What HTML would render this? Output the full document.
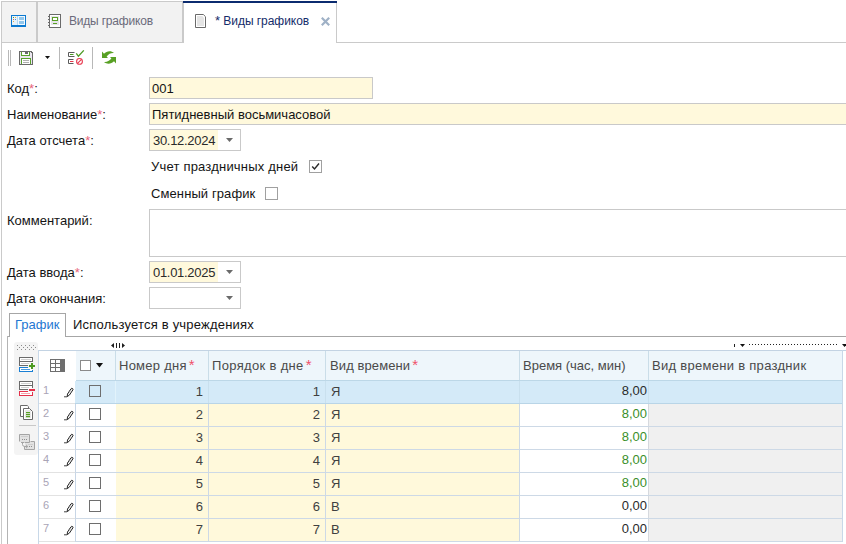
<!DOCTYPE html>
<html><head><meta charset="utf-8">
<style>
*{box-sizing:border-box;margin:0;padding:0}
html,body{width:846px;height:544px;overflow:hidden;background:#fff;font-family:"Liberation Sans",sans-serif;font-size:13px;color:#141414;position:relative}
.a{position:absolute}
.t{position:absolute;white-space:nowrap;line-height:15px}
.req{color:#e8657a}
.fld{position:absolute;border:1px solid #c9c9c9;background:#fff9dc}
.cb{position:absolute;border:1px solid #6e6e6e;background:#fff}
.dd{position:absolute;width:0;height:0;border-left:4px solid transparent;border-right:4px solid transparent;border-top:4px solid #707070}
.rn{font-size:11px;color:#a9a4b6}
.num{text-align:right}
.hd{color:#4a4a4a}
.cell{color:#404040}
.hreq{margin-left:2px;letter-spacing:0;color:#f0506a;font-size:15px;line-height:0}
</style></head><body>

<div class="a" style="left:1px;top:1px;width:35px;height:41px;background:#f2f2f2;"></div>
<div class="a" style="left:38px;top:1px;width:144px;height:41px;background:#f2f2f2;"></div>
<div class="a" style="left:1px;top:1px;width:182px;height:1px;background:#cacaca;"></div>
<div class="a" style="left:1px;top:1px;width:1px;height:543px;background:#cacaca;"></div>
<div class="a" style="left:36px;top:1px;width:2px;height:42px;background:#cacaca;"></div>
<div class="a" style="left:182px;top:1px;width:2px;height:42px;background:#cacaca;"></div>
<div class="a" style="left:1px;top:42px;width:183px;height:1px;background:#cacaca;"></div>
<div class="a" style="left:183px;top:1px;width:154px;height:2px;background:#0b2b6f;"></div>
<div class="a" style="left:336px;top:3px;width:1px;height:40px;background:#cacaca;"></div>
<div class="a" style="left:336px;top:42px;width:510px;height:1px;background:#cacaca;"></div>
<svg class="a" style="left:11px;top:15px" width="15" height="12" viewBox="0 0 15 12" shape-rendering="crispEdges">
  <rect x="0" y="0" width="15" height="12" fill="#0b79d0"/>
  <rect x="1" y="1" width="13" height="9" fill="#f2f9fe"/>
  <rect x="1" y="1" width="5" height="9" fill="#e6f3fc"/>
  <rect x="6" y="1" width="1" height="9" fill="#b4d9f3"/>
  <rect x="8" y="2" width="5" height="3" fill="#92c7ec"/>
  <rect x="8" y="6" width="5" height="3" fill="#92c7ec"/>
  <rect x="2" y="2" width="1" height="1" fill="#4a9a3a"/>
  <rect x="4" y="2" width="1" height="1" fill="#e8a840"/>
  <rect x="2" y="4" width="1" height="1" fill="#e86050"/>
  <rect x="4" y="4" width="1" height="1" fill="#3a90d8"/>
  <rect x="2" y="6" width="1" height="1" fill="#e8a840"/>
</svg>
<svg class="a" style="left:48px;top:14px" width="13" height="14" viewBox="0 0 13 14" shape-rendering="crispEdges">
  <rect x="1" y="0" width="12" height="14" fill="#6a6a6a"/>
  <rect x="2" y="1" width="10" height="12" fill="#fff"/>
  <rect x="3" y="2" width="8" height="9" fill="#e6e4ea"/>
  <rect x="4" y="3" width="6" height="4" fill="#58a024"/>
  <rect x="5" y="4" width="4" height="2" fill="#fff"/>
  <rect x="5" y="9" width="4" height="1" fill="#58a024"/>
  <rect x="0" y="2" width="1" height="1" fill="#6a6a6a"/>
  <rect x="0" y="5" width="1" height="1" fill="#6a6a6a"/>
  <rect x="0" y="8" width="1" height="1" fill="#6a6a6a"/>
  <rect x="0" y="11" width="1" height="1" fill="#6a6a6a"/>
</svg>
<div class="t " style="left:69px;top:14px;font-size:12px;letter-spacing:-0.2px;color:#6b6b7b">Виды графиков</div>
<svg class="a" style="left:195px;top:14px" width="11" height="14" viewBox="0 0 11 14">
  <path d="M0.5 0.5 H8.3 L10.5 2.7 V13.5 H0.5 Z" fill="#fff" stroke="#6a6a6a"/>
  <path d="M2 2 H7.3 L9 3.7 V12 H2 Z" fill="#e4e4e4"/>
</svg>
<div class="t " style="left:215px;top:13px;font-size:12px;letter-spacing:-0.05px;color:#142c6a"><span style="font-size:13px;letter-spacing:0">*</span> Виды графиков</div>
<svg class="a" style="left:320px;top:16px" width="11" height="11" viewBox="0 0 11 11">
  <path d="M1.8 1.8 L9.2 9.2 M9.2 1.8 L1.8 9.2" stroke="#9fb1c6" stroke-width="2.2"/>
</svg>
<div class="a" style="left:8px;top:50px;width:1px;height:16px;background:#b8b8b8;"></div>
<div class="a" style="left:10px;top:50px;width:1px;height:16px;background:#b8b8b8;"></div>
<svg class="a" style="left:19px;top:51px" width="14" height="14" viewBox="0 0 14 14" shape-rendering="crispEdges">
  <path d="M0 0 H12 L14 2 V14 H0 Z" fill="#6a6a6a"/>
  <path d="M1 1 H11.6 L13 2.4 V13 H1 Z" fill="#ebe7f0"/>
  <rect x="2" y="1" width="9" height="4" fill="#58a22a"/>
  <rect x="3" y="1" width="7" height="3" fill="#fff"/>
  <rect x="6" y="1" width="3" height="2" fill="#6a6a6a"/>
  <rect x="2" y="7" width="10" height="7" fill="#58a22a"/>
  <rect x="3" y="8" width="8" height="5" fill="#fff"/>
  <rect x="0" y="13" width="14" height="1" fill="#6a6a6a"/>
  <rect x="4" y="9" width="6" height="1" fill="#b0b0b0"/>
  <rect x="4" y="11" width="6" height="1" fill="#b0b0b0"/>
</svg>
<svg class="a" style="left:45px;top:56px" width="5" height="3" viewBox="0 0 5 3"><path d="M0 0 H5 L2.5 3 Z" fill="#111"/></svg>
<div class="a" style="left:59px;top:47px;width:1px;height:22px;background:#b8b8b8;"></div>
<svg class="a" style="left:68px;top:50px" width="17" height="15" viewBox="0 0 17 15">
  <path d="M6.5 2.5 H0.5 V6.5 H6.5" fill="none" stroke="#5a5a5a"/>
  <path d="M2 4.5 H5.5" stroke="#4b9a22"/>
  <path d="M5.5 9.5 H0.5 V13.5 H5.5" fill="none" stroke="#5a5a5a"/>
  <path d="M2 11.5 H5.5" stroke="#e23a4c"/>
  <path d="M8.3 3.4 L10.4 6.3 L15.8 0.4" fill="none" stroke="#4b9a22" stroke-width="1.3"/>
  <circle cx="11.5" cy="11.4" r="2.9" fill="none" stroke="#e83a50" stroke-width="1.1"/>
  <path d="M9.5 13.4 L13.5 9.4" stroke="#e83a50" stroke-width="1.1"/>
</svg>
<div class="a" style="left:92px;top:47px;width:1px;height:22px;background:#b8b8b8;"></div>
<svg class="a" style="left:101px;top:50px" width="16" height="14" viewBox="0 0 16 14">
  <g fill="#58a024">
  <path id="ra" d="M1 1.5 L3 3.7 C5.5 1 10 0.3 13 3 C10.2 2.7 7.8 3.7 5.6 6.4 L7 8 L1 8 Z"/>
  <path d="M1 1.5 L3 3.7 C5.5 1 10 0.3 13 3 C10.2 2.7 7.8 3.7 5.6 6.4 L7 8 L1 8 Z" transform="rotate(180 8 7.5)"/>
  </g>
</svg>
<div class="t " style="left:7px;top:81px;">Код<span class="req">*</span>:</div>
<div class="fld" style="left:149px;top:77px;width:224px;height:22px"></div>
<div class="t " style="left:152px;top:81px;">001</div>
<div class="t " style="left:7px;top:107px;">Наименование<span class="req">*</span>:</div>
<div class="fld" style="left:149px;top:103px;width:710px;height:22px"></div>
<div class="t " style="left:152px;top:107px;">Пятидневный восьмичасовой</div>
<div class="t " style="left:7px;top:133px;">Дата отсчета<span class="req">*</span>:</div>
<div class="fld" style="left:149px;top:129px;width:92px;height:22px;background:#fff"></div>
<div class="a" style="left:150px;top:130px;width:68px;height:20px;background:#fff9dc;"></div>
<div class="t " style="left:153px;top:133px;letter-spacing:-0.3px;color:#2a2a2a">30.12.2024</div>
<svg class="a" style="left:226px;top:138px" width="7" height="4" viewBox="0 0 7 4"><path d="M0 0 H7 L3.5 4 Z" fill="#6a6a6a"/></svg>
<div class="t " style="left:151px;top:159px;letter-spacing:0.2px">Учет праздничных дней</div>
<div class="cb" style="left:309px;top:160px;width:13px;height:13px;border-color:#a0a0a0"></div>
<svg class="a" style="left:311px;top:162px" width="9" height="9" viewBox="0 0 9 9"><path d="M1.2 4.5 L3.5 7 L8 1.5" fill="none" stroke="#2a2a2a" stroke-width="1.4"/></svg>
<div class="t " style="left:151px;top:186px;letter-spacing:0.1px">Сменный график</div>
<div class="cb" style="left:265px;top:187px;width:13px;height:13px;border-color:#a0a0a0"></div>
<div class="t " style="left:7px;top:213px;">Комментарий:</div>
<div class="a" style="left:149px;top:209px;width:710px;height:48px;border:1px solid #c9c9c9"></div>
<div class="t " style="left:7px;top:265px;">Дата ввода<span class="req">*</span>:</div>
<div class="fld" style="left:149px;top:261px;width:92px;height:22px;background:#fff"></div>
<div class="a" style="left:150px;top:262px;width:68px;height:20px;background:#fff9dc;"></div>
<div class="t " style="left:153px;top:265px;letter-spacing:-0.3px;color:#2a2a2a">01.01.2025</div>
<svg class="a" style="left:226px;top:270px" width="7" height="4" viewBox="0 0 7 4"><path d="M0 0 H7 L3.5 4 Z" fill="#6a6a6a"/></svg>
<div class="t " style="left:7px;top:291px;">Дата окончания:</div>
<div class="fld" style="left:149px;top:287px;width:92px;height:22px;background:#fff"></div>
<svg class="a" style="left:226px;top:296px" width="7" height="4" viewBox="0 0 7 4"><path d="M0 0 H7 L3.5 4 Z" fill="#6a6a6a"/></svg>
<div class="a" style="left:9px;top:313px;width:57px;height:24px;border:1px solid #a6a6a6;border-bottom:none;background:#fff"></div>
<div class="a" style="left:7px;top:336px;width:3px;height:1px;background:#a6a6a6;"></div>
<div class="a" style="left:65px;top:336px;width:781px;height:1px;background:#a6a6a6;"></div>
<div class="a" style="left:7px;top:336px;width:1px;height:208px;background:#b4b4b4;"></div>
<div class="t " style="left:15px;top:317px;color:#2477d2">График</div>
<div class="t " style="left:73px;top:317px;letter-spacing:0.2px">Используется в учреждениях</div>
<div class="a" style="left:14px;top:342px;width:24px;height:113px;background:#f4f4f4;border-radius:3px"></div>
<svg class="a" style="left:17px;top:345px" width="19" height="5" viewBox="0 0 19 5" shape-rendering="crispEdges"><g fill="#8c8c8c"><rect x="0" y="0" width="1" height="1"/><rect x="0" y="4" width="1" height="1"/><rect x="2" y="2" width="1" height="1"/><rect x="4" y="0" width="1" height="1"/><rect x="4" y="4" width="1" height="1"/><rect x="6" y="2" width="1" height="1"/><rect x="8" y="0" width="1" height="1"/><rect x="8" y="4" width="1" height="1"/><rect x="10" y="2" width="1" height="1"/><rect x="12" y="0" width="1" height="1"/><rect x="12" y="4" width="1" height="1"/><rect x="14" y="2" width="1" height="1"/><rect x="16" y="0" width="1" height="1"/><rect x="16" y="4" width="1" height="1"/><rect x="18" y="2" width="1" height="1"/></g></svg>
<div class="a" style="left:76px;top:351px;width:766px;height:29px;background:#eef6fb;"></div>
<div class="a" style="left:38px;top:350px;width:808px;height:1px;background:#c3d3e3;"></div>
<div class="a" style="left:38px;top:350px;width:1px;height:194px;background:#c8d8e8;"></div>
<div class="a" style="left:842px;top:350px;width:1px;height:192px;background:#c8d8e8;"></div>
<div class="a" style="left:115px;top:351px;width:1px;height:29px;background:#cadde8;"></div>
<div class="a" style="left:208px;top:351px;width:1px;height:29px;background:#cadde8;"></div>
<div class="a" style="left:325px;top:351px;width:1px;height:29px;background:#cadde8;"></div>
<div class="a" style="left:519px;top:351px;width:1px;height:29px;background:#cadde8;"></div>
<div class="a" style="left:648px;top:351px;width:1px;height:29px;background:#cadde8;"></div>
<div class="a" style="left:76px;top:380px;width:766px;height:1px;background:#bcd7e7;"></div>
<div class="a" style="left:75px;top:381px;width:767px;height:22px;background:#d4eaf8;"></div>
<div class="a" style="left:115px;top:381px;width:1px;height:22px;background:#e2f3fb;"></div>
<div class="a" style="left:208px;top:381px;width:1px;height:22px;background:#c9e0ee;"></div>
<div class="a" style="left:325px;top:381px;width:1px;height:22px;background:#c9e0ee;"></div>
<div class="a" style="left:519px;top:381px;width:1px;height:22px;background:#c9e0ee;"></div>
<div class="a" style="left:648px;top:381px;width:1px;height:22px;background:#c9e0ee;"></div>
<div class="a" style="left:39px;top:403px;width:36px;height:1px;background:#e2e2e2;"></div>
<div class="a" style="left:75px;top:403px;width:767px;height:1px;background:#b9d5e7;"></div>
<div class="a" style="left:75px;top:381px;width:1px;height:22px;background:#d4eaf8;"></div>
<div class="t  rn" style="left:43px;top:383px;">1</div>
<svg class="a" style="left:63px;top:387px" width="11" height="11" viewBox="0 0 11 11"><path d="M4.2 9.6 L4.5 7 L7.9 1.9 Q8.7 0.9 9.6 1.5 Q10.4 2.1 9.8 3 L6.4 8.1 Z" fill="#fff" stroke="#222" stroke-width="1" stroke-linejoin="round"/><path d="M5 7.2 L8.6 2.2" stroke="#9a9a9a" stroke-width=".6"/><path d="M1 9.8 H4" stroke="#444" stroke-width="1"/></svg>
<div class="cb" style="left:89px;top:385px;width:12px;height:12px;border-color:#6e6e6e;background:transparent"></div>
<div class="t  num cell" style="right:643px;top:384px;">1</div>
<div class="t  num cell" style="right:526px;top:384px;">1</div>
<div class="t  cell" style="left:331px;top:384px;">Я</div>
<div class="t  num" style="right:199px;top:383px;color:#2a2a2a">8,00</div>
<div class="a" style="left:116px;top:404px;width:403px;height:22px;background:#fff9db;"></div>
<div class="a" style="left:649px;top:404px;width:193px;height:22px;background:#f0f0f0;"></div>
<div class="a" style="left:208px;top:404px;width:1px;height:22px;background:#cdd9e6;"></div>
<div class="a" style="left:325px;top:404px;width:1px;height:22px;background:#cdd9e6;"></div>
<div class="a" style="left:519px;top:404px;width:1px;height:22px;background:#cdd9e6;"></div>
<div class="a" style="left:648px;top:404px;width:1px;height:22px;background:#d6d9de;"></div>
<div class="a" style="left:39px;top:426px;width:36px;height:1px;background:#e2e2e2;"></div>
<div class="a" style="left:75px;top:426px;width:767px;height:1px;background:#cdd9e6;"></div>
<div class="a" style="left:75px;top:404px;width:1px;height:22px;background:#c8d6e6;"></div>
<div class="t  rn" style="left:43px;top:406px;">2</div>
<svg class="a" style="left:63px;top:410px" width="11" height="11" viewBox="0 0 11 11"><path d="M4.2 9.6 L4.5 7 L7.9 1.9 Q8.7 0.9 9.6 1.5 Q10.4 2.1 9.8 3 L6.4 8.1 Z" fill="#fff" stroke="#222" stroke-width="1" stroke-linejoin="round"/><path d="M5 7.2 L8.6 2.2" stroke="#9a9a9a" stroke-width=".6"/><path d="M1 9.8 H4" stroke="#444" stroke-width="1"/></svg>
<div class="cb" style="left:89px;top:408px;width:12px;height:12px;border-color:#6e6e6e;background:transparent"></div>
<div class="t  num cell" style="right:643px;top:407px;">2</div>
<div class="t  num cell" style="right:526px;top:407px;">2</div>
<div class="t  cell" style="left:331px;top:407px;">Я</div>
<div class="t  num" style="right:199px;top:406px;color:#3a8f2a">8,00</div>
<div class="a" style="left:116px;top:427px;width:403px;height:22px;background:#fff9db;"></div>
<div class="a" style="left:649px;top:427px;width:193px;height:22px;background:#f0f0f0;"></div>
<div class="a" style="left:208px;top:427px;width:1px;height:22px;background:#cdd9e6;"></div>
<div class="a" style="left:325px;top:427px;width:1px;height:22px;background:#cdd9e6;"></div>
<div class="a" style="left:519px;top:427px;width:1px;height:22px;background:#cdd9e6;"></div>
<div class="a" style="left:648px;top:427px;width:1px;height:22px;background:#d6d9de;"></div>
<div class="a" style="left:39px;top:449px;width:36px;height:1px;background:#e2e2e2;"></div>
<div class="a" style="left:75px;top:449px;width:767px;height:1px;background:#cdd9e6;"></div>
<div class="a" style="left:75px;top:427px;width:1px;height:22px;background:#c8d6e6;"></div>
<div class="t  rn" style="left:43px;top:429px;">3</div>
<svg class="a" style="left:63px;top:433px" width="11" height="11" viewBox="0 0 11 11"><path d="M4.2 9.6 L4.5 7 L7.9 1.9 Q8.7 0.9 9.6 1.5 Q10.4 2.1 9.8 3 L6.4 8.1 Z" fill="#fff" stroke="#222" stroke-width="1" stroke-linejoin="round"/><path d="M5 7.2 L8.6 2.2" stroke="#9a9a9a" stroke-width=".6"/><path d="M1 9.8 H4" stroke="#444" stroke-width="1"/></svg>
<div class="cb" style="left:89px;top:431px;width:12px;height:12px;border-color:#6e6e6e;background:transparent"></div>
<div class="t  num cell" style="right:643px;top:430px;">3</div>
<div class="t  num cell" style="right:526px;top:430px;">3</div>
<div class="t  cell" style="left:331px;top:430px;">Я</div>
<div class="t  num" style="right:199px;top:429px;color:#3a8f2a">8,00</div>
<div class="a" style="left:116px;top:450px;width:403px;height:22px;background:#fff9db;"></div>
<div class="a" style="left:649px;top:450px;width:193px;height:22px;background:#f0f0f0;"></div>
<div class="a" style="left:208px;top:450px;width:1px;height:22px;background:#cdd9e6;"></div>
<div class="a" style="left:325px;top:450px;width:1px;height:22px;background:#cdd9e6;"></div>
<div class="a" style="left:519px;top:450px;width:1px;height:22px;background:#cdd9e6;"></div>
<div class="a" style="left:648px;top:450px;width:1px;height:22px;background:#d6d9de;"></div>
<div class="a" style="left:39px;top:472px;width:36px;height:1px;background:#e2e2e2;"></div>
<div class="a" style="left:75px;top:472px;width:767px;height:1px;background:#cdd9e6;"></div>
<div class="a" style="left:75px;top:450px;width:1px;height:22px;background:#c8d6e6;"></div>
<div class="t  rn" style="left:43px;top:452px;">4</div>
<svg class="a" style="left:63px;top:456px" width="11" height="11" viewBox="0 0 11 11"><path d="M4.2 9.6 L4.5 7 L7.9 1.9 Q8.7 0.9 9.6 1.5 Q10.4 2.1 9.8 3 L6.4 8.1 Z" fill="#fff" stroke="#222" stroke-width="1" stroke-linejoin="round"/><path d="M5 7.2 L8.6 2.2" stroke="#9a9a9a" stroke-width=".6"/><path d="M1 9.8 H4" stroke="#444" stroke-width="1"/></svg>
<div class="cb" style="left:89px;top:454px;width:12px;height:12px;border-color:#6e6e6e;background:transparent"></div>
<div class="t  num cell" style="right:643px;top:453px;">4</div>
<div class="t  num cell" style="right:526px;top:453px;">4</div>
<div class="t  cell" style="left:331px;top:453px;">Я</div>
<div class="t  num" style="right:199px;top:452px;color:#3a8f2a">8,00</div>
<div class="a" style="left:116px;top:473px;width:403px;height:22px;background:#fff9db;"></div>
<div class="a" style="left:649px;top:473px;width:193px;height:22px;background:#f0f0f0;"></div>
<div class="a" style="left:208px;top:473px;width:1px;height:22px;background:#cdd9e6;"></div>
<div class="a" style="left:325px;top:473px;width:1px;height:22px;background:#cdd9e6;"></div>
<div class="a" style="left:519px;top:473px;width:1px;height:22px;background:#cdd9e6;"></div>
<div class="a" style="left:648px;top:473px;width:1px;height:22px;background:#d6d9de;"></div>
<div class="a" style="left:39px;top:495px;width:36px;height:1px;background:#e2e2e2;"></div>
<div class="a" style="left:75px;top:495px;width:767px;height:1px;background:#cdd9e6;"></div>
<div class="a" style="left:75px;top:473px;width:1px;height:22px;background:#c8d6e6;"></div>
<div class="t  rn" style="left:43px;top:475px;">5</div>
<svg class="a" style="left:63px;top:479px" width="11" height="11" viewBox="0 0 11 11"><path d="M4.2 9.6 L4.5 7 L7.9 1.9 Q8.7 0.9 9.6 1.5 Q10.4 2.1 9.8 3 L6.4 8.1 Z" fill="#fff" stroke="#222" stroke-width="1" stroke-linejoin="round"/><path d="M5 7.2 L8.6 2.2" stroke="#9a9a9a" stroke-width=".6"/><path d="M1 9.8 H4" stroke="#444" stroke-width="1"/></svg>
<div class="cb" style="left:89px;top:477px;width:12px;height:12px;border-color:#6e6e6e;background:transparent"></div>
<div class="t  num cell" style="right:643px;top:476px;">5</div>
<div class="t  num cell" style="right:526px;top:476px;">5</div>
<div class="t  cell" style="left:331px;top:476px;">Я</div>
<div class="t  num" style="right:199px;top:475px;color:#3a8f2a">8,00</div>
<div class="a" style="left:116px;top:496px;width:403px;height:22px;background:#fff9db;"></div>
<div class="a" style="left:649px;top:496px;width:193px;height:22px;background:#f0f0f0;"></div>
<div class="a" style="left:208px;top:496px;width:1px;height:22px;background:#cdd9e6;"></div>
<div class="a" style="left:325px;top:496px;width:1px;height:22px;background:#cdd9e6;"></div>
<div class="a" style="left:519px;top:496px;width:1px;height:22px;background:#cdd9e6;"></div>
<div class="a" style="left:648px;top:496px;width:1px;height:22px;background:#d6d9de;"></div>
<div class="a" style="left:39px;top:518px;width:36px;height:1px;background:#e2e2e2;"></div>
<div class="a" style="left:75px;top:518px;width:767px;height:1px;background:#cdd9e6;"></div>
<div class="a" style="left:75px;top:496px;width:1px;height:22px;background:#c8d6e6;"></div>
<div class="t  rn" style="left:43px;top:498px;">6</div>
<svg class="a" style="left:63px;top:502px" width="11" height="11" viewBox="0 0 11 11"><path d="M4.2 9.6 L4.5 7 L7.9 1.9 Q8.7 0.9 9.6 1.5 Q10.4 2.1 9.8 3 L6.4 8.1 Z" fill="#fff" stroke="#222" stroke-width="1" stroke-linejoin="round"/><path d="M5 7.2 L8.6 2.2" stroke="#9a9a9a" stroke-width=".6"/><path d="M1 9.8 H4" stroke="#444" stroke-width="1"/></svg>
<div class="cb" style="left:89px;top:500px;width:12px;height:12px;border-color:#6e6e6e;background:transparent"></div>
<div class="t  num cell" style="right:643px;top:499px;">6</div>
<div class="t  num cell" style="right:526px;top:499px;">6</div>
<div class="t  cell" style="left:331px;top:499px;">В</div>
<div class="t  num" style="right:199px;top:498px;color:#2a2a2a">0,00</div>
<div class="a" style="left:116px;top:519px;width:403px;height:22px;background:#fff9db;"></div>
<div class="a" style="left:649px;top:519px;width:193px;height:22px;background:#f0f0f0;"></div>
<div class="a" style="left:208px;top:519px;width:1px;height:22px;background:#cdd9e6;"></div>
<div class="a" style="left:325px;top:519px;width:1px;height:22px;background:#cdd9e6;"></div>
<div class="a" style="left:519px;top:519px;width:1px;height:22px;background:#cdd9e6;"></div>
<div class="a" style="left:648px;top:519px;width:1px;height:22px;background:#d6d9de;"></div>
<div class="a" style="left:39px;top:541px;width:36px;height:1px;background:#e2e2e2;"></div>
<div class="a" style="left:75px;top:541px;width:767px;height:1px;background:#cdd9e6;"></div>
<div class="a" style="left:75px;top:519px;width:1px;height:22px;background:#c8d6e6;"></div>
<div class="t  rn" style="left:43px;top:521px;">7</div>
<svg class="a" style="left:63px;top:525px" width="11" height="11" viewBox="0 0 11 11"><path d="M4.2 9.6 L4.5 7 L7.9 1.9 Q8.7 0.9 9.6 1.5 Q10.4 2.1 9.8 3 L6.4 8.1 Z" fill="#fff" stroke="#222" stroke-width="1" stroke-linejoin="round"/><path d="M5 7.2 L8.6 2.2" stroke="#9a9a9a" stroke-width=".6"/><path d="M1 9.8 H4" stroke="#444" stroke-width="1"/></svg>
<div class="cb" style="left:89px;top:523px;width:12px;height:12px;border-color:#6e6e6e;background:transparent"></div>
<div class="t  num cell" style="right:643px;top:522px;">7</div>
<div class="t  num cell" style="right:526px;top:522px;">7</div>
<div class="t  cell" style="left:331px;top:522px;">В</div>
<div class="t  num" style="right:199px;top:521px;color:#2a2a2a">0,00</div>
<svg class="a" style="left:50px;top:359px" width="15" height="13" viewBox="0 0 15 13" shape-rendering="crispEdges"><rect x="0" y="0" width="15" height="13" fill="#6e6e6e"/><g fill="#fff"><rect x="1" y="1" width="4" height="3"/><rect x="6" y="1" width="4" height="3"/><rect x="1" y="5" width="4" height="3"/><rect x="6" y="5" width="4" height="3"/><rect x="1" y="9" width="4" height="3"/><rect x="6" y="9" width="4" height="3"/></g></svg>
<div class="cb" style="left:80px;top:360px;width:11px;height:11px;border-color:#8a8a8a"></div>
<svg class="a" style="left:96px;top:363px" width="7" height="5" viewBox="0 0 7 5"><path d="M0 0 H7 L3.5 4.5 Z" fill="#111"/></svg>
<div class="t  hd" style="left:119px;top:358px;letter-spacing:0.25px">Номер дня<span class="req hreq">*</span></div>
<div class="t  hd" style="left:212px;top:358px;letter-spacing:0.33px">Порядок в дне<span class="req hreq">*</span></div>
<div class="t  hd" style="left:330px;top:358px;letter-spacing:0.1px">Вид времени<span class="req hreq">*</span></div>
<div class="t  hd" style="left:523px;top:358px;letter-spacing:0px">Время (час, мин)</div>
<div class="t  hd" style="left:652px;top:358px;letter-spacing:0.29px">Вид времени в праздник</div>
<svg class="a" style="left:111px;top:343px" width="14" height="5" viewBox="0 0 14 5"><path d="M0 2.5 L3 0 V5 Z M11 0 L14 2.5 L11 5 Z" fill="#1e1e1e"/><rect x="5" y="0" width="1" height="5" fill="#1e1e1e"/><rect x="8" y="0" width="1" height="5" fill="#1e1e1e"/></svg>
<svg class="a" style="left:19px;top:357px" width="17" height="15" viewBox="0 0 17 15" shape-rendering="crispEdges">
<g fill="#6a6a6a"><rect x="0" y="0" width="14" height="1"/><rect x="0" y="4" width="14" height="1"/><rect x="0" y="8" width="9" height="1"/><rect x="0" y="0" width="1" height="9"/><rect x="13" y="0" width="1" height="5"/></g>
<rect x="1" y="1" width="12" height="3" fill="#fff"/><rect x="1" y="5" width="9" height="3" fill="#fff"/>
<rect x="2" y="2" width="10" height="1" fill="#d0d0d0"/><rect x="2" y="6" width="8" height="1" fill="#d0d0d0"/>
<g fill="#1a7fd4"><rect x="0" y="10" width="9" height="1"/><rect x="0" y="10" width="1" height="5"/><rect x="0" y="14" width="14" height="1"/><rect x="13" y="13" width="1" height="2"/></g>
<rect x="1" y="11" width="12" height="3" fill="#fff"/>
<rect x="2" y="12" width="9" height="1" fill="#4a9be0"/>
<g fill="#4b9a22"><rect x="10" y="8" width="6" height="2"/><rect x="12" y="6" width="2" height="6"/></g>
</svg>
<svg class="a" style="left:19px;top:381px" width="17" height="15" viewBox="0 0 17 15" shape-rendering="crispEdges">
<g fill="#6a6a6a"><rect x="0" y="0" width="14" height="1"/><rect x="0" y="4" width="14" height="1"/><rect x="0" y="8" width="9" height="1"/><rect x="0" y="0" width="1" height="9"/><rect x="13" y="0" width="1" height="7"/></g>
<rect x="1" y="1" width="12" height="3" fill="#fff"/><rect x="1" y="5" width="12" height="3" fill="#fff"/>
<rect x="2" y="2" width="10" height="1" fill="#d0d0d0"/><rect x="2" y="6" width="8" height="1" fill="#d0d0d0"/>
<g fill="#e4304a"><rect x="0" y="10" width="9" height="1"/><rect x="0" y="10" width="1" height="5"/><rect x="0" y="14" width="14" height="1"/><rect x="13" y="11" width="1" height="4"/></g>
<rect x="1" y="11" width="12" height="3" fill="#fff"/>
<rect x="2" y="12" width="9" height="1" fill="#f4a4ac"/>
<rect x="10" y="8" width="6" height="2" fill="#e4304a"/>
</svg>
<svg class="a" style="left:20px;top:405px" width="13" height="15" viewBox="0 0 13 15">
<path d="M0.5 0.5 H7.3 L8.5 1.7 V11.5 H0.5 Z" fill="#fff" stroke="#6a6a6a"/>
<path d="M3.5 3.5 H9.5 L12.5 6.5 V14.5 H3.5 Z" fill="#fff" stroke="#6a6a6a"/>
<rect x="5" y="5" width="6" height="8" fill="#e8e8e8"/>
<g fill="#58a024"><rect x="6" y="7" width="4" height="1.2"/><rect x="6" y="9" width="4" height="1.2"/><rect x="6" y="11" width="4" height="1.2"/></g>
</svg>
<div class="a" style="left:19px;top:425px;width:17px;height:1px;background:#c8c8c8;"></div>
<svg class="a" style="left:19px;top:434px" width="16" height="16" viewBox="0 0 16 16">
<rect x="6" y="8" width="9" height="7" fill="#e2e2e2"/>
<path d="M11.5 7.5 H15.5 V15.5 H5.5 V12.5" fill="none" stroke="#a4a4a4"/>
<rect x="1" y="1" width="9" height="7" fill="#e2e2e2"/>
<path d="M0.5 7.5 V0.5 H10.5 V8.5 H5.5" fill="none" stroke="#a4a4a4"/>
<rect x="2" y="2" width="7" height="1" fill="#cdcdcd"/>
<g fill="#8e8e8e"><rect x="3" y="5" width="1" height="1"/><rect x="5" y="5" width="1" height="1"/><rect x="7" y="5" width="1" height="1"/><rect x="10" y="12" width="1" height="1"/><rect x="12" y="12" width="1" height="1"/></g>
<rect x="9" y="10" width="5" height="1" fill="#cdcdcd"/>
<path d="M3.5 9 V10.5 Q3.5 12.5 6 12.5 H8.5" fill="none" stroke="#a4a4a4"/>
<path d="M7 10.8 L8.8 12.5 L7 14.2" fill="none" stroke="#a4a4a4"/>
<path d="M2 8.5 H5" stroke="#a4a4a4"/>
</svg>
<div class="a" style="left:734px;top:344px;width:1px;height:3px;background:#222;"></div>
<svg class="a" style="left:740px;top:344px" width="5" height="3" viewBox="0 0 5 3"><path d="M0 0 H5 L2.5 3 Z" fill="#111"/></svg>
<svg class="a" style="left:749px;top:344px" width="90" height="1" shape-rendering="crispEdges"><g fill="#222"><rect x="0" y="0" width="1" height="1"/><rect x="3" y="0" width="1" height="1"/><rect x="6" y="0" width="1" height="1"/><rect x="9" y="0" width="1" height="1"/><rect x="12" y="0" width="1" height="1"/><rect x="15" y="0" width="1" height="1"/><rect x="18" y="0" width="1" height="1"/><rect x="21" y="0" width="1" height="1"/><rect x="24" y="0" width="1" height="1"/><rect x="27" y="0" width="1" height="1"/><rect x="30" y="0" width="1" height="1"/><rect x="33" y="0" width="1" height="1"/><rect x="36" y="0" width="1" height="1"/><rect x="39" y="0" width="1" height="1"/><rect x="42" y="0" width="1" height="1"/><rect x="45" y="0" width="1" height="1"/><rect x="48" y="0" width="1" height="1"/><rect x="51" y="0" width="1" height="1"/><rect x="54" y="0" width="1" height="1"/><rect x="57" y="0" width="1" height="1"/><rect x="60" y="0" width="1" height="1"/><rect x="63" y="0" width="1" height="1"/><rect x="66" y="0" width="1" height="1"/><rect x="69" y="0" width="1" height="1"/><rect x="72" y="0" width="1" height="1"/><rect x="75" y="0" width="1" height="1"/><rect x="78" y="0" width="1" height="1"/><rect x="81" y="0" width="1" height="1"/><rect x="84" y="0" width="1" height="1"/><rect x="87" y="0" width="1" height="1"/></g></svg>
<svg class="a" style="left:842px;top:344px" width="5" height="3" viewBox="0 0 5 3"><path d="M0 0 H5 L2.5 3 Z" fill="#111"/></svg>
</body></html>
